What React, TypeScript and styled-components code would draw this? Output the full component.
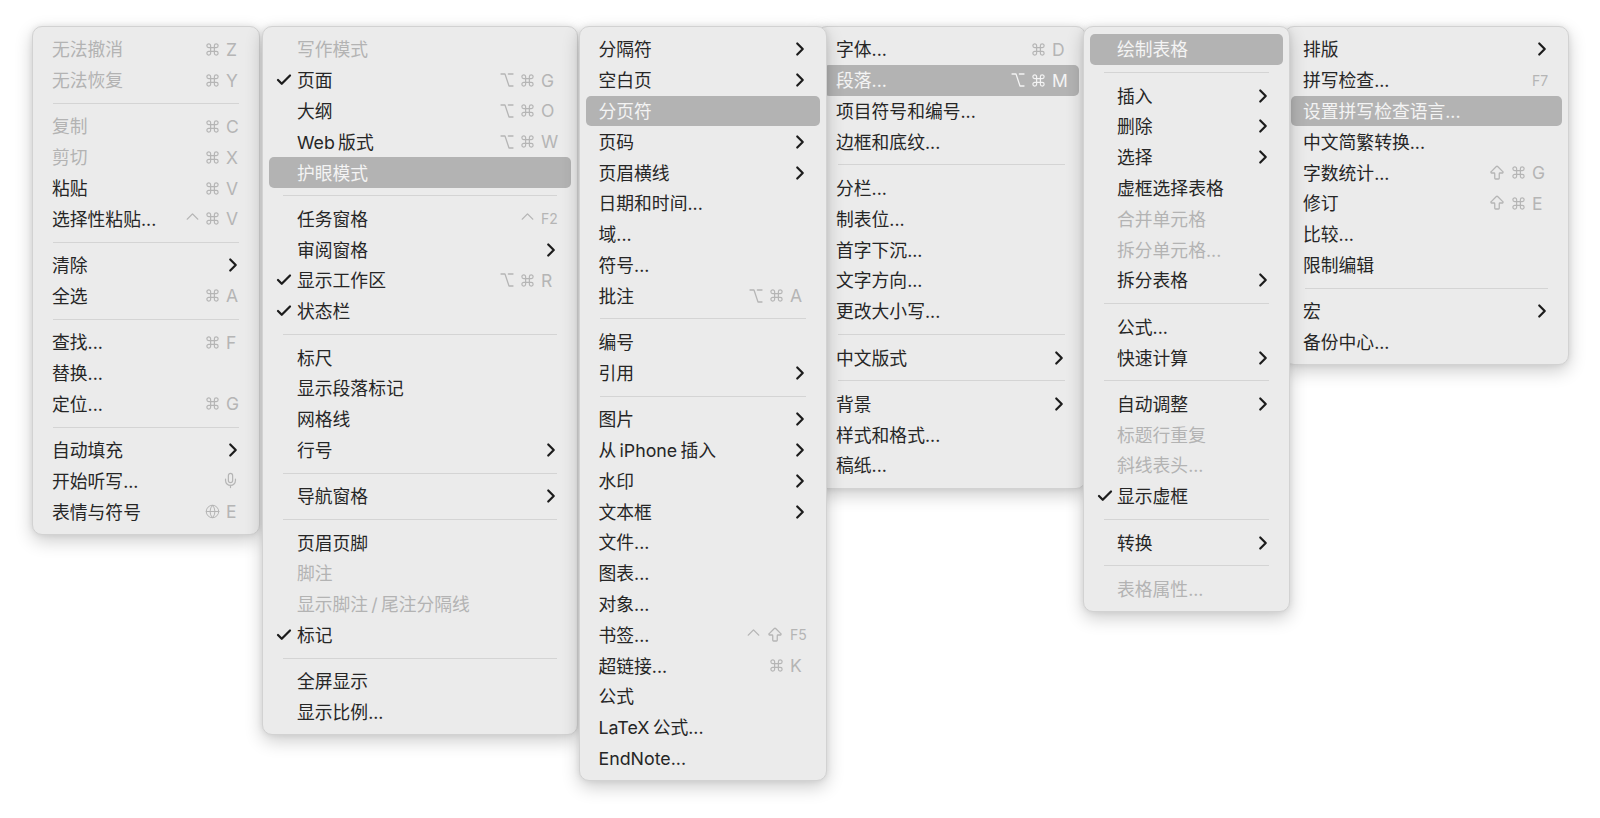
import React from 'react'
import styled, { createGlobalStyle } from 'styled-components'
import { ArrowBigUp, Check, ChevronRight, ChevronUp, Command, Globe, Mic, Option } from 'lucide-react'

const GlobalStyle = createGlobalStyle`
  html, body {
    margin: 0;
    background: #fff;
  }
  body {
    font-family: Inter, "Noto Sans CJK SC", sans-serif;
    overflow: hidden;
  }
`

const Page = styled.div`
  display: flex;
  align-items: flex-start;
  height: 818px;
  box-sizing: border-box;
  padding: 26px 0 0 32px;
`

const Panel = styled.div<{ $width: number; $shift: number; $layer: number }>`
  position: relative;
  z-index: ${p => p.$layer};
  width: ${p => p.$width}px;
  margin-left: ${p => p.$shift}px;
  flex: none;
  box-sizing: border-box;
  padding: 7px 7px;
  background: #ebebeb;
  border: 1px solid #d2d2d2;
  border-radius: 10px;
  box-shadow: 0 6px 18px rgba(0, 0, 0, 0.2), 0 0 6px rgba(0, 0, 0, 0.08);
`

const Row = styled.div<{ $active?: boolean; $muted?: boolean }>`
  display: flex;
  align-items: center;
  box-sizing: border-box;
  height: 30.8px;
  padding: 0 14px 0 8px;
  margin: 0 -1px;
  border-radius: 5px;
  font-size: 17.8px;
  white-space: nowrap;
  color: ${p => (p.$active ? '#f4f4f4' : p.$muted ? '#b3b3b3' : '#262626')};
  background: ${p => (p.$active ? '#b3b3b3' : 'transparent')};
`

const TickSlot = styled.span<{ $width: number }>`
  display: flex;
  align-items: center;
  flex: none;
  width: ${p => p.$width}px;
  color: #1c1c1c;

  svg {
    margin-left: -2px;
  }
`

const Label = styled.span`
  flex: 1;
  padding-top: 2px;
  line-height: 22px;
`

const Keys = styled.span<{ $active?: boolean }>`
  display: flex;
  align-items: center;
  gap: 5px;
  color: ${p => (p.$active ? '#f4f4f4' : '#b5b5b5')};
`

const KeyCap = styled.span<{ $width: number; $small?: boolean }>`
  width: ${p => p.$width}px;
  margin-left: 1px;
  font-size: ${p => (p.$small ? 14 : 17.5)}px;
`

const WideCaret = styled(ChevronUp)`
  margin: -2px -3px 2px;
`

const Arrow = styled(ChevronRight)`
  flex: none;
  margin-right: -5px;
  color: #1c1c1c;
`

const Divider = styled.div`
  height: 1px;
  margin: 7.25px 13px;
  background: #d4d4d4;
`

type Mod = 'cmd' | 'opt' | 'ctrl' | 'shift' | 'globe' | 'mic'

type Entry = {
  text?: string
  off?: boolean
  on?: boolean
  tick?: boolean
  more?: boolean
  mods?: Mod[]
  cap?: string
}

const SEP: Entry = {}

const ModIcon = ({ kind }: { kind: Mod }) => {
  switch (kind) {
    case 'cmd':
      return <Command size={15} strokeWidth={1.9} />
    case 'opt':
      return <Option size={16} strokeWidth={1.9} />
    case 'ctrl':
      return <WideCaret size={21} strokeWidth={1.6} />
    case 'shift':
      return <ArrowBigUp size={18} strokeWidth={1.7} />
    case 'globe':
      return <Globe size={15} strokeWidth={1.6} />
    default:
      return <Mic size={17} strokeWidth={1.7} />
  }
}

const menus: { width: number; shift: number; layer: number; slot: number; capWidth: number; items: Entry[] }[] = [
  {
    width: 228, shift: 0, layer: 1, slot: 5, capWidth: 13,
    items: [
      { text: '无法撤消', off: true, mods: ['cmd'], cap: 'Z' },
      { text: '无法恢复', off: true, mods: ['cmd'], cap: 'Y' },
      SEP,
      { text: '复制', off: true, mods: ['cmd'], cap: 'C' },
      { text: '剪切', off: true, mods: ['cmd'], cap: 'X' },
      { text: '粘贴', mods: ['cmd'], cap: 'V' },
      { text: '选择性粘贴...', mods: ['ctrl', 'cmd'], cap: 'V' },
      SEP,
      { text: '清除', more: true },
      { text: '全选', mods: ['cmd'], cap: 'A' },
      SEP,
      { text: '查找...', mods: ['cmd'], cap: 'F' },
      { text: '替换...' },
      { text: '定位...', mods: ['cmd'], cap: 'G' },
      SEP,
      { text: '自动填充', more: true },
      { text: '开始听写...', mods: ['mic'] },
      { text: '表情与符号', mods: ['globe'], cap: 'E' },
    ],
  },
  {
    width: 316, shift: 2, layer: 1, slot: 20, capWidth: 16,
    items: [
      { text: '写作模式', off: true },
      { text: '页面', tick: true, mods: ['opt', 'cmd'], cap: 'G' },
      { text: '大纲', mods: ['opt', 'cmd'], cap: 'O' },
      { text: 'Web\u2009版式', mods: ['opt', 'cmd'], cap: 'W' },
      { text: '护眼模式', on: true },
      SEP,
      { text: '任务窗格', mods: ['ctrl'], cap: 'F2' },
      { text: '审阅窗格', more: true },
      { text: '显示工作区', tick: true, mods: ['opt', 'cmd'], cap: 'R' },
      { text: '状态栏', tick: true },
      SEP,
      { text: '标尺' },
      { text: '显示段落标记' },
      { text: '网格线' },
      { text: '行号', more: true },
      SEP,
      { text: '导航窗格', more: true },
      SEP,
      { text: '页眉页脚' },
      { text: '脚注', off: true },
      { text: '显示脚注\u2009/\u2009尾注分隔线', off: true },
      { text: '标记', tick: true },
      SEP,
      { text: '全屏显示' },
      { text: '显示比例...' },
    ],
  },
  {
    width: 248.5, shift: 0.5, layer: 3, slot: 5, capWidth: 16,
    items: [
      { text: '分隔符', more: true },
      { text: '空白页', more: true },
      { text: '分页符', on: true },
      { text: '页码', more: true },
      { text: '页眉横线', more: true },
      { text: '日期和时间...' },
      { text: '域...' },
      { text: '符号...' },
      { text: '批注', mods: ['opt', 'cmd'], cap: 'A' },
      SEP,
      { text: '编号' },
      { text: '引用', more: true },
      SEP,
      { text: '图片', more: true },
      { text: '从\u2009iPhone\u2009插入', more: true },
      { text: '水印', more: true },
      { text: '文本框', more: true },
      { text: '文件...' },
      { text: '图表...' },
      { text: '对象...' },
      { text: '书签...', mods: ['ctrl', 'shift'], cap: 'F5' },
      { text: '超链接...', mods: ['cmd'], cap: 'K' },
      { text: '公式' },
      { text: 'LaTeX\u2009公式...' },
      { text: 'EndNote...' },
    ],
  },
  {
    width: 269, shift: -10, layer: 1, slot: 4, capWidth: 13,
    items: [
      { text: '字体...', mods: ['cmd'], cap: 'D' },
      { text: '段落...', on: true, mods: ['opt', 'cmd'], cap: 'M' },
      { text: '项目符号和编号...' },
      { text: '边框和底纹...' },
      SEP,
      { text: '分栏...' },
      { text: '制表位...' },
      { text: '首字下沉...' },
      { text: '文字方向...' },
      { text: '更改大小写...' },
      SEP,
      { text: '中文版式', more: true },
      SEP,
      { text: '背景', more: true },
      { text: '样式和格式...' },
      { text: '稿纸...' },
    ],
  },
  {
    width: 207, shift: -3, layer: 3, slot: 19, capWidth: 16,
    items: [
      { text: '绘制表格', on: true },
      SEP,
      { text: '插入', more: true },
      { text: '删除', more: true },
      { text: '选择', more: true },
      { text: '虚框选择表格' },
      { text: '合并单元格', off: true },
      { text: '拆分单元格...', off: true },
      { text: '拆分表格', more: true },
      SEP,
      { text: '公式...' },
      { text: '快速计算', more: true },
      SEP,
      { text: '自动调整', more: true },
      { text: '标题行重复', off: true },
      { text: '斜线表头...', off: true },
      { text: '显示虚框', tick: true },
      SEP,
      { text: '转换', more: true },
      SEP,
      { text: '表格属性...', off: true },
    ],
  },
  {
    width: 285, shift: -6, layer: 1, slot: 4, capWidth: 16,
    items: [
      { text: '排版', more: true },
      { text: '拼写检查...', cap: 'F7' },
      { text: '设置拼写检查语言...', on: true },
      { text: '中文简繁转换...' },
      { text: '字数统计...', mods: ['shift', 'cmd'], cap: 'G' },
      { text: '修订', mods: ['shift', 'cmd'], cap: 'E' },
      { text: '比较...' },
      { text: '限制编辑' },
      SEP,
      { text: '宏', more: true },
      { text: '备份中心...' },
    ],
  },
]

const App = () => (
  <>
    <GlobalStyle />
    <Page>
      {menus.map((menu, m) => (
        <Panel key={m} $width={menu.width} $shift={menu.shift} $layer={menu.layer}>
          {menu.items.map((item, i) =>
            item.text ? (
              <Row key={i} $active={item.on} $muted={item.off}>
                <TickSlot $width={menu.slot}>{item.tick && <Check size={18} strokeWidth={3} />}</TickSlot>
                <Label>{item.text}</Label>
                {(item.mods || item.cap) && (
                  <Keys $active={item.on}>
                    {item.mods?.map(mod => <ModIcon key={mod} kind={mod} />)}
                    {item.cap && (
                      <KeyCap $width={menu.capWidth} $small={item.cap.length > 1}>
                        {item.cap}
                      </KeyCap>
                    )}
                  </Keys>
                )}
                {item.more && <Arrow size={22} strokeWidth={2.4} />}
              </Row>
            ) : (
              <Divider key={i} />
            ),
          )}
        </Panel>
      ))}
    </Page>
  </>
)

export default App
